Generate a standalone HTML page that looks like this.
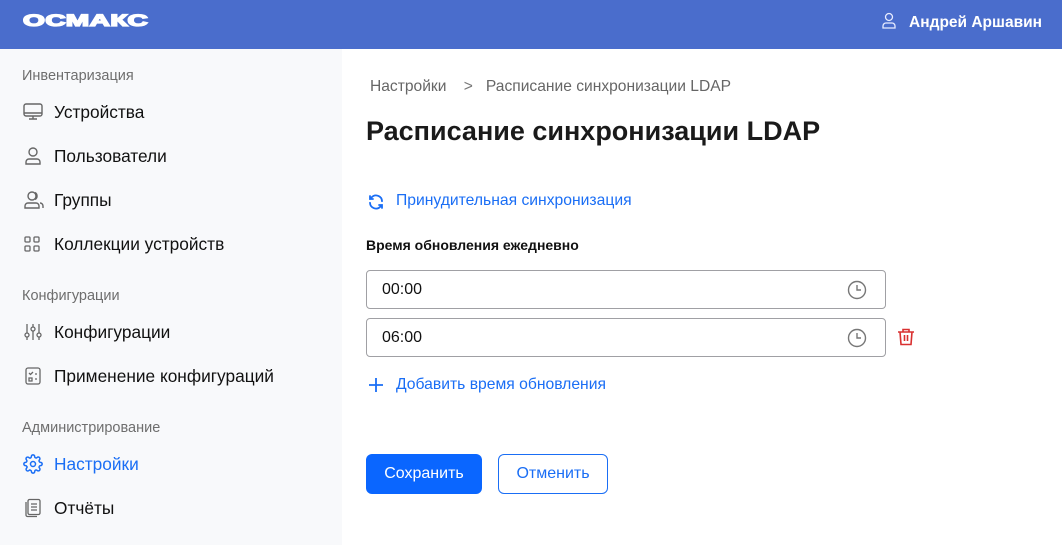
<!DOCTYPE html>
<html><head><meta charset="utf-8"><style>
*{box-sizing:border-box;margin:0;padding:0}
body{width:1062px;height:545px;overflow:hidden;font-family:"Liberation Sans",sans-serif;background:#fff;position:relative}
.hdr{position:absolute;left:0;top:0;width:1062px;height:49px;background:#4a6dcc}
.logo{position:absolute;left:23px;top:13px;color:#fff;font-weight:bold;font-size:19px;line-height:19px;letter-spacing:0.3px;-webkit-text-stroke:1.6px #fff;transform:scaleX(1.48) scaleY(0.85);transform-origin:left top}
.user{position:absolute;right:20px;top:14px;color:#fff;font-weight:bold;font-size:15.5px}
.side{position:absolute;left:0;top:49px;width:342px;height:496px;background:#f8f9fb}
.sec{position:absolute;left:22px;font-size:14.5px;color:#6e6e6e}
.it{position:absolute;left:54px;font-size:17.3px;color:#111}
.ic{position:absolute;left:23px}
.abs{position:absolute}
.inp{position:absolute;left:366px;width:520px;height:39px;border:1px solid #a0a0a4;border-radius:4px;font-size:16px;color:#111;padding:10px 15px}
</style></head><body>
<div class="hdr"><div class="logo">ОСМАКС</div>
<svg class="abs" style="left:881px;top:12px" width="16" height="18" viewBox="0 0 16 18" fill="none" stroke="#e8ecff" stroke-width="1.3"><circle cx="8" cy="5" r="3.5"/><path d="M2 16v-2a3 3 0 0 1 3-3h6a3 3 0 0 1 3 3v2z"/></svg>
<div class="user">Андрей Аршавин</div></div>
<div class="side"></div>
<div class="sec" style="top:68px">Инвентаризация</div>
<svg class="ic" style="top:103px" width="20" height="18" viewBox="0 0 20 18" fill="none" stroke="#666" stroke-width="1.4"><rect x="1" y="1" width="18" height="12" rx="2"/><path d="M1 10h18M10 13v3M6 16h8"/></svg>
<div class="it" style="top:102px">Устройства</div>
<svg class="ic" style="top:146px" width="20" height="20" viewBox="0 0 20 20" fill="none" stroke="#666" stroke-width="1.4"><circle cx="10" cy="6" r="4"/><path d="M3 18v-2a3 3 0 0 1 3-3h8a3 3 0 0 1 3 3v2z"/></svg>
<div class="it" style="top:146px">Пользователи</div>
<svg class="ic" style="top:190px" width="22" height="20" viewBox="0 0 22 20" fill="none" stroke="#666" stroke-width="1.4"><circle cx="9" cy="6" r="4"/><path d="M2 18v-2a3 3 0 0 1 3-3h8a3 3 0 0 1 3 3v2zM12 2.5a4 4 0 0 1 0 7M17 13a3 3 0 0 1 3 3v2"/></svg>
<div class="it" style="top:190px">Группы</div>
<svg class="ic" style="top:235px" width="18" height="18" viewBox="0 0 18 18" fill="none" stroke="#666" stroke-width="1.3"><rect x="2" y="2" width="5" height="5" rx="1"/><rect x="11" y="2" width="5" height="5" rx="1"/><rect x="2" y="11" width="5" height="5" rx="1"/><rect x="11" y="11" width="5" height="5" rx="1"/></svg>
<div class="it" style="top:234px">Коллекции устройств</div>
<div class="sec" style="top:288px">Конфигурации</div>
<svg class="ic" style="top:322px" width="20" height="20" viewBox="0 0 20 20" fill="none" stroke="#666" stroke-width="1.3"><path d="M4 2v9M4 15v3M10 2v3M10 9v9M16 2v9M16 15v3"/><circle cx="4" cy="13" r="2"/><circle cx="10" cy="7" r="2"/><circle cx="16" cy="13" r="2"/></svg>
<div class="it" style="top:322px">Конфигурации</div>
<svg class="ic" style="top:366px" width="20" height="20" viewBox="0 0 20 20" fill="none" stroke="#666" stroke-width="1.3"><rect x="3" y="2" width="14" height="16" rx="2"/><path d="M6 7l1.5 1.5L10 6M6 12h3v3H6zM12 8h2M12 13h2"/></svg>
<div class="it" style="top:366px">Применение конфигураций</div>
<div class="sec" style="top:420px">Администрирование</div>
<svg class="ic" style="top:454px" width="20" height="20" viewBox="0 0 24 24" fill="none" stroke="#1a6ef5" stroke-width="1.8"><circle cx="12" cy="12" r="3"/><path d="M19.4 15a1.65 1.65 0 0 0 .33 1.82l.06.06a2 2 0 1 1-2.830 2.83l-.06-.06a1.65 1.65 0 0 0-1.82-.33 1.65 1.65 0 0 0-1 1.51V21a2 2 0 1 1-4 0v-.09A1.65 1.65 0 0 0 9 19.4a1.65 1.65 0 0 0-1.82.33l-.06.06a2 2 0 1 1-2.83-2.83l.06-.06A1.65 1.65 0 0 0 4.68 15a1.65 1.65 0 0 0-1.51-1H3a2 2 0 1 1 0-4h.09A1.65 1.65 0 0 0 4.6 9a1.65 1.65 0 0 0-.33-1.82l-.06-.06a2 2 0 1 1 2.83-2.83l.06.06A1.65 1.65 0 0 0 9 4.68 1.65 1.65 0 0 0 10 3.17V3a2 2 0 1 1 4 0v.09a1.65 1.65 0 0 0 1 1.51 1.65 1.65 0 0 0 1.82-.33l.06-.06a2 2 0 1 1 2.83 2.83l-.06.06A1.65 1.65 0 0 0 19.4 9a1.65 1.65 0 0 0 1.51 1H21a2 2 0 1 1 0 4h-.09a1.65 1.65 0 0 0-1.51 1z"/></svg>
<div class="it" style="top:454px;color:#1a6ef5">Настройки</div>
<svg class="ic" style="top:498px" width="20" height="20" viewBox="0 0 20 20" fill="none" stroke="#666" stroke-width="1.3"><rect x="5" y="1.5" width="12" height="15" rx="1.5"/><path d="M3 4v13a1.5 1.5 0 0 0 1.5 1.5H14M8 6h6M8 9h6M8 12h6"/></svg>
<div class="it" style="top:498px">Отчёты</div>

<div class="abs" style="left:370px;top:78px;font-size:15.6px;color:#666">Настройки &nbsp;&nbsp;&nbsp;<span style="color:#777">&gt;</span>&nbsp;&nbsp; Расписание синхронизации LDAP</div>
<div class="abs" style="left:366px;top:116px;font-size:27px;font-weight:bold;color:#1a1a1a">Расписание синхронизации LDAP</div>
<svg class="abs" style="left:367px;top:193px" width="18" height="18" viewBox="0 0 24 24" fill="none" stroke="#1a6ef5" stroke-width="2.4" stroke-linecap="round"><path d="M20 11a8 8 0 0 0-14-5l-2 2M4 4v4h4M4 13a8 8 0 0 0 14 5l2-2M20 20v-4h-4"/></svg>
<div class="abs" style="left:396px;top:192px;font-size:15.7px;color:#1a6ef5">Принудительная синхронизация</div>
<div class="abs" style="left:366px;top:237px;font-size:14px;font-weight:bold;color:#111">Время обновления ежедневно</div>
<div class="inp" style="top:270px">00:00</div>
<div class="inp" style="top:318px">06:00</div>
<svg class="abs" style="left:847px;top:280px" width="20" height="20" viewBox="0 0 20 20" fill="none" stroke="#777" stroke-width="1.4"><circle cx="10" cy="10" r="8.5"/><path d="M10 5v5h4"/></svg>
<svg class="abs" style="left:847px;top:328px" width="20" height="20" viewBox="0 0 20 20" fill="none" stroke="#777" stroke-width="1.4"><circle cx="10" cy="10" r="8.5"/><path d="M10 5v5h4"/></svg>
<svg class="abs" style="left:896px;top:327px" width="20" height="20" viewBox="0 0 20 20" fill="none" stroke="#d93030" stroke-width="1.6"><path d="M2 5h16M7 5V2.5h6V5M4 5l1 12.5h10L16 5M8.5 8v6M11.5 8v6"/></svg>
<svg class="abs" style="left:368px;top:377px" width="16" height="16" viewBox="0 0 16 16" stroke="#1a6ef5" stroke-width="1.8"><path d="M8 1v14M1 8h14"/></svg>
<div class="abs" style="left:396px;top:376px;font-size:15.7px;color:#1a6ef5">Добавить время обновления</div>
<div class="abs" style="left:366px;top:454px;width:116px;height:40px;background:#0a66ff;border-radius:6px;color:#fff;font-size:16px;text-align:center;line-height:40px">Сохранить</div>
<div class="abs" style="left:498px;top:454px;width:110px;height:40px;border:1px solid #1a6ef5;border-radius:6px;color:#1a6ef5;font-size:16px;text-align:center;line-height:38px">Отменить</div>
</body></html>
